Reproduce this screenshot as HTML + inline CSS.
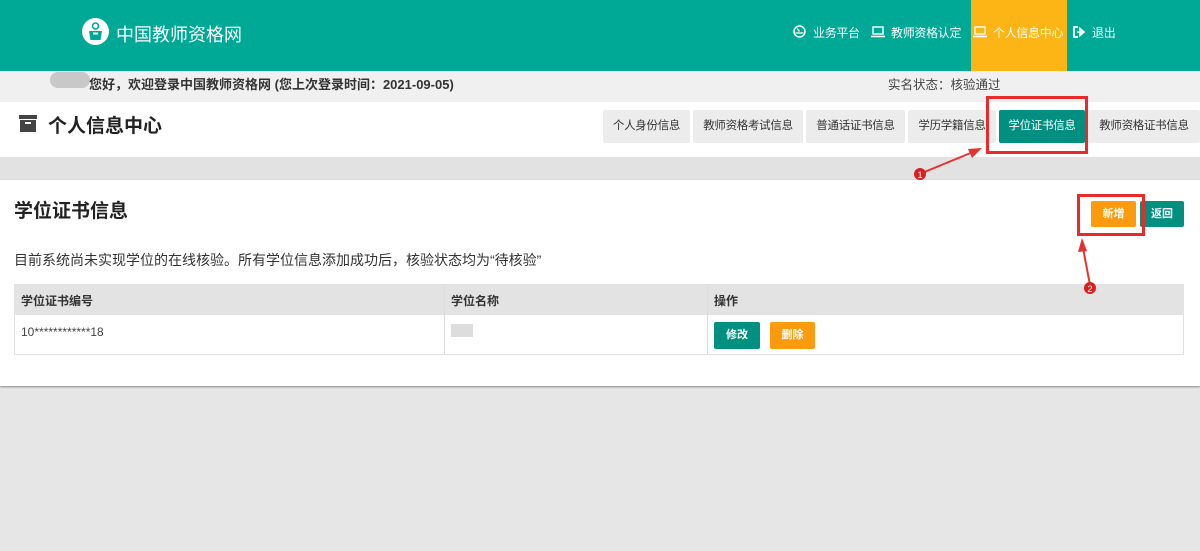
<!DOCTYPE html>
<html><head><meta charset="utf-8"><style>
*{margin:0;padding:0;box-sizing:border-box}
body{width:1200px;height:551px;overflow:hidden;background:#e6e6e6;font-family:"Liberation Sans","Noto Sans CJK SC",sans-serif;position:relative;color:#333}
.a{position:absolute}
.hdr{left:0;top:0;width:1200px;height:71px;background:#00a996}
.nav{color:#fff;font-size:12px;top:24px;white-space:nowrap;letter-spacing:-0.3px}
.tab{top:110px;height:33px;background:#ececec;font-size:11.5px;color:#333;line-height:33px;text-align:center;border-radius:2px;letter-spacing:-0.3px;white-space:nowrap}
.btn{color:#fff;font-size:11px;font-weight:bold;text-align:center;border-radius:2px}
</style></head><body>
<div class="a hdr"></div>
<svg class="a" style="left:82px;top:18px" width="27" height="27" viewBox="0 0 27 27"><circle cx="13.5" cy="13.5" r="13.5" fill="#fff"/><circle cx="13.5" cy="8" r="3" fill="none" stroke="#00a996" stroke-width="1.6"/><path d="M7 13h13l-1.5 9h-10z" fill="#00a996"/><rect x="11" y="14.5" width="5" height="2" fill="#fff"/></svg>
<div class="a" style="left:116px;top:21px;color:#fff;font-size:18px">中国教师资格网</div>
<div class="a" style="left:971px;top:0;width:96px;height:71px;background:#fdb515"></div>
<svg class="a" style="left:793px;top:25px" width="13" height="13" viewBox="0 0 13 13"><circle cx="6.5" cy="6.5" r="5.5" fill="none" stroke="#fff" stroke-width="1.5"/><path d="M6.5 6.5L4 3.5M2.5 8h8" stroke="#fff" stroke-width="1.3"/></svg>
<div class="a nav" style="left:813px">业务平台</div>
<svg class="a" style="left:871px;top:26px" width="14" height="12" viewBox="0 0 14 12"><rect x="2" y="1" width="10" height="7" fill="none" stroke="#fff" stroke-width="1.4"/><path d="M0 10.5h14" stroke="#fff" stroke-width="1.6"/></svg>
<div class="a nav" style="left:891px">教师资格认定</div>
<svg class="a" style="left:973px;top:26px" width="14" height="12" viewBox="0 0 14 12"><rect x="2" y="1" width="10" height="7" fill="none" stroke="#fff" stroke-width="1.4"/><path d="M0 10.5h14" stroke="#fff" stroke-width="1.6"/></svg>
<div class="a nav" style="left:993px">个人信息中心</div>
<svg class="a" style="left:1073px;top:26px" width="12" height="12" viewBox="0 0 12 12"><path d="M5 1H1v10h4" fill="none" stroke="#fff" stroke-width="1.8"/><path d="M4 6h4M7 2.5L11 6 7 9.5z" stroke="#fff" fill="#fff" stroke-width="1.6"/></svg>
<div class="a nav" style="left:1092px">退出</div>
<div class="a" style="left:0;top:71px;width:1200px;height:31px;background:#f0f0f0"></div>
<div class="a" style="left:50px;top:72px;width:40px;height:16px;border-radius:8px;background:#c8c8c8"></div>
<div class="a" style="left:89px;top:74px;font-size:13px;font-weight:bold;color:#333">您好，欢迎登录中国教师资格网 (您上次登录时间：2021-09-05)</div>
<div class="a" style="left:888px;top:74px;font-size:12.5px;color:#444">实名状态：核验通过</div>
<div class="a" style="left:0;top:102px;width:1200px;height:55px;background:#fff"></div>
<svg class="a" style="left:19px;top:115px" width="18" height="17" viewBox="0 0 18 17"><rect x="0" y="0" width="18" height="4" fill="#444"/><rect x="1" y="5" width="16" height="12" fill="#444"/><rect x="6" y="7" width="6" height="2" fill="#fff"/></svg>
<div class="a" style="left:48px;top:111px;font-size:19px;font-weight:bold;color:#222">个人信息中心</div>
<div class="a tab" style="left:603px;width:87px">个人身份信息</div>
<div class="a tab" style="left:693px;width:110px">教师资格考试信息</div>
<div class="a tab" style="left:806px;width:99px">普通话证书信息</div>
<div class="a tab" style="left:908px;width:88px">学历学籍信息</div>
<div class="a tab" style="left:999px;width:86px;background:#008f80;color:#fff">学位证书信息</div>
<div class="a tab" style="left:1088px;width:112px">教师资格证书信息</div>
<div class="a" style="left:0;top:157px;width:1200px;height:23px;background:#e2e2e2"></div>
<div class="a" style="left:0;top:180px;width:1200px;height:206px;background:#fff;box-shadow:0 1px 2px #888"></div>
<div class="a" style="left:14px;top:196px;font-size:19px;font-weight:bold;color:#222">学位证书信息</div>
<div class="a" style="left:14px;top:250px;font-size:14px;color:#333">目前系统尚未实现学位的在线核验。所有学位信息添加成功后，核验状态均为“待核验”</div>
<div class="a" style="left:14px;top:284px;width:1170px;height:71px;border:1px solid #e0e0e0"></div>
<div class="a" style="left:14px;top:284px;width:1170px;height:31px;background:#e3e3e3"></div>
<div class="a" style="left:444px;top:284px;width:1px;height:71px;background:#ddd"></div>
<div class="a" style="left:707px;top:284px;width:1px;height:71px;background:#ddd"></div>
<div class="a" style="left:21px;top:292px;font-size:12px;font-weight:bold">学位证书编号</div>
<div class="a" style="left:451px;top:292px;font-size:12px;font-weight:bold">学位名称</div>
<div class="a" style="left:714px;top:292px;font-size:12px;font-weight:bold">操作</div>
<div class="a" style="left:21px;top:325px;font-size:12px;color:#444">10************18</div>
<div class="a" style="left:451px;top:324px;width:22px;height:13px;background:#ddd"></div>
<div class="a btn" style="left:714px;top:322px;width:46px;height:27px;line-height:27px;background:#00907f">修改</div>
<div class="a btn" style="left:770px;top:322px;width:45px;height:27px;line-height:27px;background:#fd9b0f">删除</div>
<div class="a btn" style="left:1091px;top:201px;width:45px;height:26px;line-height:26px;background:#fd9b0f">新增</div>
<div class="a btn" style="left:1140px;top:201px;width:44px;height:26px;line-height:26px;background:#00907f">返回</div>
<div class="a" style="left:986px;top:96px;width:102px;height:58px;border:3px solid #e82a2a"></div>
<div class="a" style="left:1077px;top:194px;width:68px;height:42px;border:3px solid #e82a2a"></div>
<svg class="a" style="left:0;top:0" width="1200" height="551"><path d="M922 173L973 152" stroke="#e83030" stroke-width="2"/><path d="M982 148L968 149 972 158z" fill="#e83030"/><circle cx="920" cy="174" r="6" fill="#d82020"/><text x="920" y="178" font-size="9" fill="#fff" text-anchor="middle" font-family="Liberation Sans">1</text><path d="M1090 285L1083 248" stroke="#e83030" stroke-width="2"/><path d="M1082 238L1078 252 1087 251z" fill="#e83030"/><circle cx="1090" cy="288" r="6" fill="#d82020"/><text x="1090" y="292" font-size="9" fill="#fff" text-anchor="middle" font-family="Liberation Sans">2</text></svg>
</body></html>
